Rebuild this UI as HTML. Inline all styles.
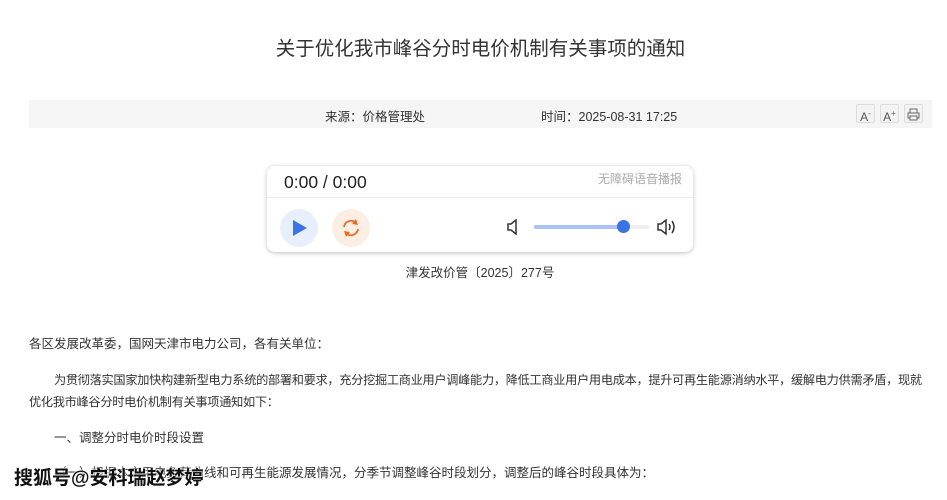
<!DOCTYPE html>
<html><head><meta charset="utf-8"><style>
*{margin:0;padding:0;box-sizing:border-box}
body{width:947px;height:500px;overflow:hidden;background:#fff;font-family:"Liberation Sans","Noto Sans CJK SC",sans-serif;color:#333;position:relative}
.a{position:absolute;white-space:nowrap}
.t{font-size:12.5px;color:#333}
.btn{position:absolute;top:104px;width:19px;height:19px;border:1px solid #ddd;background:#f3f3f3;border-radius:2px;font-size:12px;color:#555;text-align:center;line-height:18px}
</style></head><body>
<div class="a" style="left:0;width:961px;top:32px;text-align:center;font-size:19.5px;color:#333">关于优化我市峰谷分时电价机制有关事项的通知</div>
<div class="a" style="left:29px;top:100px;width:903px;height:28px;background:#f5f5f5"></div>
<div class="a t" style="left:325px;top:106px">来源：价格管理处</div>
<div class="a t" style="left:541px;top:106px">时间：2025-08-31 17:25</div>
<div class="btn" style="left:856px">A<sup style="font-size:8px">-</sup></div>
<div class="btn" style="left:880px">A<sup style="font-size:8px">+</sup></div>
<div class="btn" style="left:904px"><svg width="13" height="13" viewBox="0 0 13 13" style="margin-top:3px"><rect x="3" y="1" width="7" height="4" fill="none" stroke="#666"/><rect x="1" y="5" width="11" height="5" fill="none" stroke="#666"/><rect x="3" y="8" width="7" height="4" fill="#f3f3f3" stroke="#666"/></svg></div>
<div class="a" style="left:267px;top:166px;width:426px;height:86px;border-radius:8px;background:#fff;box-shadow:0 1px 5px rgba(0,0,0,.25)">
 <div class="a" style="left:17px;top:6px;font-size:17.5px;color:#222">0:00 / 0:00</div>
 <div class="a" style="right:11px;top:4px;font-size:12px;color:#aaa">无障碍语音播报</div>
 <div class="a" style="left:0;right:0;top:31px;height:1px;background:#eee"></div>
 <div class="a" style="left:13px;top:43px;width:38px;height:38px;border-radius:50%;background:#e8effc"></div>
 <svg class="a" style="left:24px;top:53px" width="18" height="18"><polygon points="2,1 16,9 2,17" fill="#3a73e6"/></svg>
 <div class="a" style="left:65px;top:43px;width:38px;height:38px;border-radius:50%;background:#fdeee4"></div>
 <svg class="a" style="left:72px;top:50px" width="24" height="24" viewBox="0 0 24 24"><path d="M5 11a7 7 0 0 1 12-4" fill="none" stroke="#ee6a22" stroke-width="1.8"/><path d="M19 13a7 7 0 0 1-12 4" fill="none" stroke="#ee6a22" stroke-width="1.8"/><polygon points="17,3 19,9 13,8" fill="#ee6a22"/><polygon points="7,21 5,15 11,16" fill="#ee6a22"/></svg>
 <svg class="a" style="left:240px;top:53px" width="14" height="16"><path d="M1 5h3l5-4v14l-5-4H1z" fill="none" stroke="#333" stroke-width="1.5"/></svg>
 <div class="a" style="left:267px;top:59px;width:115px;height:4px;background:#eee;border-radius:2px"></div>
 <div class="a" style="left:267px;top:59px;width:90px;height:4px;background:#a9c1f4;border-radius:2px"></div>
 <div class="a" style="left:350px;top:54px;width:13px;height:13px;background:#3a73e6;border-radius:50%"></div>
 <svg class="a" style="left:390px;top:52px" width="22" height="18"><path d="M1 6h3l5-4v14l-5-4H1z" fill="none" stroke="#333" stroke-width="1.5"/><path d="M12 6q2 3 0 6M15 3q4 6 0 12" fill="none" stroke="#333" stroke-width="1.5"/></svg>
</div>
<div class="a t" style="left:0;width:960px;text-align:center;top:262px">津发改价管〔2025〕277号</div>
<div class="a t" style="left:29px;top:333px">各区发展改革委，国网天津市电力公司，各有关单位：</div>
<div class="a t" style="left:29px;top:369px;line-height:22px;font-size:12.2px;letter-spacing:-0.3px"><span style="padding-left:25px"></span>为贯彻落实国家加快构建新型电力系统的部署和要求，充分挖掘工商业用户调峰能力，降低工商业用户用电成本，提升可再生能源消纳水平，缓解电力供需矛盾，现就<br>优化我市峰谷分时电价机制有关事项通知如下：</div>
<div class="a t" style="left:54px;top:427px">一、调整分时电价时段设置</div>
<div class="a t" style="left:54px;top:462px">（一）根据本市用电负荷曲线和可再生能源发展情况，分季节调整峰谷时段划分，调整后的峰谷时段具体为：</div>
<div class="a" style="left:14px;top:463px;font-size:19px;font-weight:bold;color:#111;text-shadow:0 0 2px #fff,0 0 2px #fff">搜狐号@安科瑞赵梦婷</div>
</body></html>
